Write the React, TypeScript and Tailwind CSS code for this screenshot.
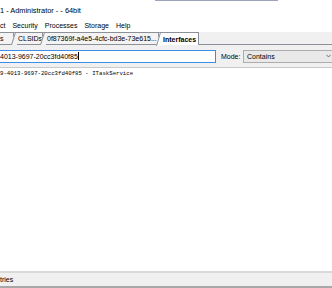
import React from "react";

const ui = "font-['Liberation_Sans',Arial,sans-serif] text-[7px] leading-none text-black";

function Tab({
  label,
  width,
  active,
  slant = true,
}: {
  label: string;
  width: number;
  active?: boolean;
  slant?: boolean;
}) {
  const h = active ? 14 : 13;
  return (
    <div
      className={`relative flex items-center shrink-0 border-t border-r border-[#8d9097] ${
        active ? "bg-white font-bold h-[13px] -mb-px z-10" : "bg-[#f3f3f3] h-[12px]"
      } ${slant ? "pl-[4px]" : "pl-0"}`}
      style={{ width }}
    >
      {slant && (
        <svg className="absolute left-[-3px] top-[-1px]" width="6" height={h} viewBox={`0 0 6 ${h}`}>
          <polygon points={`0,${h} 4,0 6,0 6,${h}`} fill={active ? "#ffffff" : "#f3f3f3"} />
          <line x1="0.5" y1={h} x2="4.5" y2="0.5" stroke="#8d9097" strokeWidth="1" />
          <line x1="4" y1="0.5" x2="6" y2="0.5" stroke="#8d9097" strokeWidth="1" />
        </svg>
      )}
      <span className="relative whitespace-nowrap">{label}</span>
    </div>
  );
}

export default function App() {
  return (
    <div className={`w-[332px] h-[288px] overflow-hidden bg-white flex flex-col ${ui}`}>
      {/* strip of the window behind */}
      <div className="h-[3px] shrink-0 flex">
        <div className="ml-[155px] w-[123px] h-px bg-[#9da3b8]" />
      </div>

      {/* title */}
      <div className="h-[16px] shrink-0 flex items-center text-[7.4px]">1 - Administrator - - 64bit</div>

      {/* menu */}
      <div className="h-[13px] shrink-0 flex items-center gap-[7px]">
        <span>ct</span>
        <span>Security</span>
        <span>Processes</span>
        <span>Storage</span>
        <span>Help</span>
      </div>

      {/* tabs */}
      <div className="h-[13px] shrink-0 bg-[#f0f0f0] flex items-end border-b border-[#8d9097]">
        <Tab label="s" width={14} slant={false} />
        <Tab label="CLSIDs" width={29} />
        <Tab label="0f87369f-a4e5-4cfc-bd3e-73e615..." width={116} />
        <Tab label="Interfaces" width={40} active />
      </div>

      {/* filter row */}
      <div className="h-[23px] shrink-0 bg-[#f0f0f0] flex items-center border-b border-[#c9c9c9]">
        <div className="w-[216px] h-[13px] bg-white border border-l-0 border-[#3c8ee6] flex items-center">
          <span>4013-9697-20cc3fd40f85</span>
          <span className="w-px h-[8px] bg-black" />
        </div>
        <span className="ml-[5px] w-[22px]">Mode:</span>
        <div className="flex-1 h-[13px] bg-[#e9e9e9] border border-r-0 border-[#adadad] flex items-center pl-[3px]">
          <span className="flex-1">Contains</span>
          <svg width="5" height="4" viewBox="0 0 5 4" className="mr-[1px]">
            <path d="M0.5 0.8 L2.5 3 L4.5 0.8" fill="none" stroke="#555" strokeWidth="0.8" />
          </svg>
        </div>
      </div>

      {/* list */}
      <div className="flex-1 bg-white pt-[3px] font-['Liberation_Mono','Courier_New',monospace] text-[5.7px]">
        9-4013-9697-20cc3fd40f85 - ITaskService
      </div>

      {/* status */}
      <div className="h-[2px] shrink-0 bg-[#d9d9d9]" />
      <div className="h-[13px] shrink-0 bg-[#f0f0f0] flex items-center">
        <span className="w-[82px]">tries</span>
      </div>
      <div className="h-[2px] shrink-0 bg-[#a8a8a8]" />
    </div>
  );
}
